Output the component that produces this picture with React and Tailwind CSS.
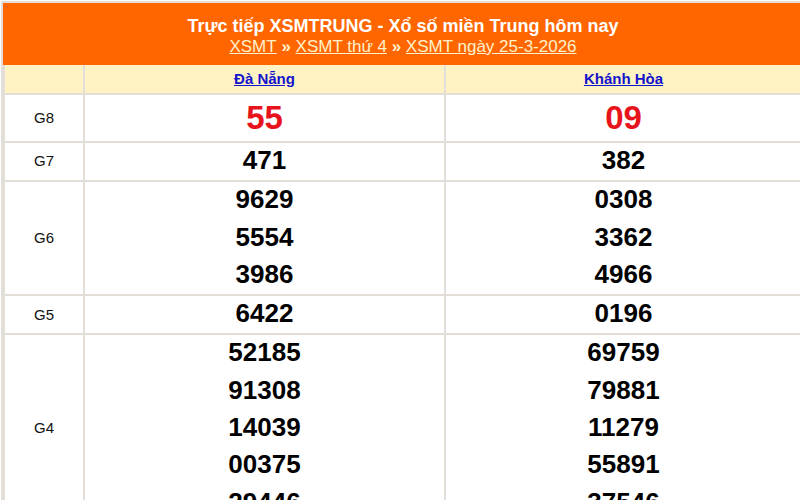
import React from 'react';

const rows = [
  { label: 'G8', a: ['55'], b: ['09'], special: true },
  { label: 'G7', a: ['471'], b: ['382'] },
  { label: 'G6', a: ['9629', '5554', '3986'], b: ['0308', '3362', '4966'] },
  { label: 'G5', a: ['6422'], b: ['0196'] },
  { label: 'G4', a: ['52185', '91308', '14039', '00375', '29446'], b: ['69759', '79881', '11279', '55891', '37546'] },
];

const Cell = ({ nums, special }) => (
  <td className="border-2 border-[#e3dfd8] text-center align-top p-0">
    {nums.map((n) => (
      <div
        key={n}
        className={
          special
            ? 'h-[46px] leading-[46px] text-[33px] font-bold text-[#e8141c]'
            : 'h-[37.3px] leading-[35px] text-[26px] font-bold text-black'
        }
      >
        {n}
      </div>
    ))}
  </td>
);

export default function App() {
  return (
    <div className="w-[800px] h-[500px] overflow-hidden bg-white" style={{ fontFamily: '"Liberation Sans", Arial, sans-serif' }}>
      <div className="ml-[1px] mt-[1px] w-[804px] border-2 border-[#e3dfd8]">
        <div className="bg-[#ff6600] h-[62px] flex flex-col items-center pt-[12px] text-center">
          <div className="text-white font-bold text-[18px] leading-[22px]">
            Trực tiếp XSMTRUNG - Xổ số miền Trung hôm nay
          </div>
          <div className="text-[#fff1cc] text-[17px] leading-[20px]">
            <a href="#" className="underline">XSMT</a>
            <span className="font-bold"> » </span>
            <a href="#" className="underline">XSMT thứ 4</a>
            <span className="font-bold"> » </span>
            <a href="#" className="underline">XSMT ngày 25-3-2026</a>
          </div>
        </div>
        <table className="w-full border-collapse table-fixed">
          <colgroup>
            <col className="w-[80px]" />
            <col className="w-[361px]" />
            <col />
          </colgroup>
          <thead>
            <tr className="bg-[#fff3c4] h-[29px]">
              <th className="border-2 border-[#e3dfd8] border-t-0"></th>
              <th className="border-2 border-[#e3dfd8] border-t-0 text-[15px] font-bold">
                <a href="#" className="text-[#1414cc] underline">Đà Nẵng</a>
              </th>
              <th className="border-2 border-[#e3dfd8] border-t-0 text-[15px] font-bold">
                <a href="#" className="text-[#1414cc] underline">Khánh Hòa</a>
              </th>
            </tr>
          </thead>
          <tbody>
            {rows.map((r) => (
              <tr key={r.label}>
                <td className="border-2 border-[#e3dfd8] text-center align-middle text-[15px] text-[#111]">{r.label}</td>
                <Cell nums={r.a} special={r.special} />
                <Cell nums={r.b} special={r.special} />
              </tr>
            ))}
          </tbody>
        </table>
      </div>
    </div>
  );
}
